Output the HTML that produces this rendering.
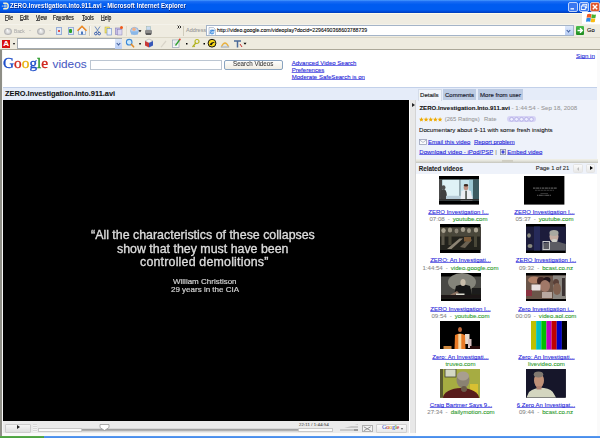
<!DOCTYPE html>
<html><head><meta charset="utf-8">
<style>
*{margin:0;padding:0;box-sizing:border-box}
html,body{width:600px;height:438px;overflow:hidden;background:#fff;font-family:"Liberation Sans",sans-serif;position:relative}
.a{position:absolute}
.t{position:absolute;white-space:nowrap;line-height:1;-webkit-text-stroke-width:0.08px}
#title{left:0;top:0;width:600px;height:12.5px;background:linear-gradient(#4a9cff 0,#1a6cf4 12%,#005cf0 35%,#005cf0 75%,#0048d4 90%,#003cb8 100%)}
#menu{left:0;top:12.5px;width:600px;height:11.5px;background:#efece1;border-top:1px solid #fffbe8}
#tb1{left:0;top:24px;width:600px;height:13px;background:#efece1;border-top:1px solid #f4f2ea}
#tb2{left:0;top:37px;width:600px;height:13px;background:#eeebdf;border-top:1px solid #dcd8c8}
.mi{font-size:6.9px;color:#000;top:15px;transform:scaleX(0.73);transform-origin:0 0;-webkit-text-stroke:0.15px #000}
.lnk{color:#2424d8;text-decoration:underline;text-decoration-color:rgba(50,50,220,0.7);text-decoration-skip-ink:none;text-underline-offset:0.2px}
.g{color:#2b9a2b}
.gr{color:#8a8a8a}
.vq{font-size:12.4px;color:#dcdcdc;-webkit-text-stroke:0.35px #dcdcdc;filter:blur(0.3px)}
.vs{font-size:8px;color:#d0d0d0;-webkit-text-stroke:0.2px #d0d0d0;filter:blur(0.25px)}
</style></head><body>
<!-- title bar -->
<div id="title" class="a"></div>
<div class="t" style="left:10px;top:2.2px;font-size:7.4px;letter-spacing:0.1px;font-weight:bold;color:#fff;text-shadow:0.5px 0.5px 0 #0a2a8a;transform:scaleX(0.81);transform-origin:0 0;-webkit-text-stroke-width:0">ZERO.Investigation.Into.911.avi - Microsoft Internet Explorer</div>
<svg class="a" style="left:1px;top:2px" width="8" height="8" viewBox="0 0 8 8"><path d="M2.2 1.2 H5 Q7.2 1.4 7.2 4 Q7.2 6.6 5 6.8 H2.2" fill="none" stroke="#f4f0c8" stroke-width="1.5"/><circle cx="4.2" cy="4" r="1.7" fill="#8ab8f0"/><circle cx="1.6" cy="4.2" r="0.9" fill="#7aa0d8"/></svg>
<svg class="a" style="left:567.5px;top:1.5px" width="32" height="10" viewBox="0 0 32 10">
<rect x="0.5" y="0.5" width="9" height="9" rx="1.5" fill="#3a78f0" stroke="#e8f0ff" stroke-width="0.8"/>
<rect x="2.5" y="6.2" width="3.5" height="1.3" fill="#fff"/>
<rect x="11.5" y="0.5" width="9" height="9" rx="1.5" fill="#3a78f0" stroke="#e8f0ff" stroke-width="0.8"/>
<rect x="14.8" y="2.3" width="4" height="3.5" fill="none" stroke="#fff" stroke-width="0.9"/>
<rect x="13.3" y="4" width="4" height="3.5" fill="#3a78f0" stroke="#fff" stroke-width="0.9"/>
<rect x="22.5" y="0.5" width="9" height="9" rx="1.5" fill="#e2562c" stroke="#f0e0d8" stroke-width="0.8"/>
<path d="M24.8 2.8 L29.2 7.2 M29.2 2.8 L24.8 7.2" stroke="#fff" stroke-width="1.4"/>
</svg>

<!-- menu -->
<div id="menu" class="a"></div>
<div class="t mi" style="left:5px">File</div>
<div class="t mi" style="left:19.5px">Edit</div>
<div class="t mi" style="left:36px">View</div>
<div class="t mi" style="left:53px">Favorites</div>
<div class="t mi" style="left:82px">Tools</div>
<div class="t mi" style="left:101px">Help</div>
<div class="a" style="left:582px;top:12px;width:18px;height:12px;background:#fff"></div>
<div class="a" style="left:5px;top:20.2px;width:3px;height:0.6px;background:#555"></div><div class="a" style="left:20px;top:20.2px;width:3px;height:0.6px;background:#555"></div><div class="a" style="left:36.3px;top:20.2px;width:3.5px;height:0.6px;background:#555"></div><div class="a" style="left:57.5px;top:20.2px;width:3px;height:0.6px;background:#555"></div><div class="a" style="left:82px;top:20.2px;width:3px;height:0.6px;background:#555"></div><div class="a" style="left:101.2px;top:20.2px;width:3.5px;height:0.6px;background:#555"></div>

<!-- toolbar 1 -->
<div id="tb1" class="a"></div>
<div class="a" style="left:206px;top:25px;width:368px;height:11px;background:#fff;border:1px solid #a4b4c8"></div>
<div class="t" style="left:217px;top:28px;font-size:5.2px;color:#000">http://video.google.com/videoplay?docid=2296490368603788739</div>
<div class="t" style="left:186px;top:28px;font-size:5.5px;color:#999">Address</div>

<!-- toolbar 2 -->
<div id="tb2" class="a"></div>
<div class="a" style="left:17px;top:38px;width:105px;height:11px;background:#fff;border:1px solid #a5acb2"></div>


<!-- toolbar1 icons -->
<div class="a" style="left:4px;top:27.5px;width:7.5px;height:7px;border-radius:50%;background:radial-gradient(#f4f4f4 0,#e0e0e0 30%,#b8b8b8 60%,#c8c8c8 100%)"></div>
<div class="t" style="left:13.5px;top:27.8px;font-size:6px;color:#aaa;transform:scaleX(0.8);transform-origin:0 0">Back</div>
<div class="a" style="left:6.3px;top:29.3px;width:0;height:0;border-right:2.5px solid #fff;border-top:1.8px solid transparent;border-bottom:1.8px solid transparent"></div><div class="a" style="left:28.5px;top:30.3px;width:0;height:0;border-top:1.8px solid #bbb;border-left:1.3px solid transparent;border-right:1.3px solid transparent"></div>
<div class="a" style="left:37px;top:27.5px;width:7.5px;height:7px;border-radius:50%;background:radial-gradient(#f4f4f4 0,#e0e0e0 30%,#b8b8b8 60%,#c8c8c8 100%)"></div>
<div class="a" style="left:40px;top:29.3px;width:0;height:0;border-left:2.5px solid #fff;border-top:1.8px solid transparent;border-bottom:1.8px solid transparent"></div><div class="a" style="left:49px;top:30.3px;width:0;height:0;border-top:1.8px solid #bbb;border-left:1.3px solid transparent;border-right:1.3px solid transparent"></div>
<div class="a" style="left:56px;top:27px;width:6px;height:7.5px;background:#dfe8f6;border:1px solid #9ab0d8"></div>
<div class="a" style="left:58px;top:29.8px;width:2px;height:2px;background:#e02010;border-radius:50%"></div>
<div class="a" style="left:67.5px;top:27px;width:6px;height:7.5px;background:#dfe8f6;border:1px solid #9ab0d8"></div>
<div class="a" style="left:69px;top:28.5px;width:3px;height:4.5px;background:#2aa02a;border-radius:1px"></div>
<svg class="a" style="left:76px;top:25px" width="80" height="11" viewBox="0 0 80 11">
<!-- home -->
<path d="M2.5 5.5 L6 2 L9.5 5.5 V9.5 H2.5Z" fill="#eef2f8" stroke="#7090c0" stroke-width="0.6"/>
<path d="M1.5 5.8 L6 1.3 L10.5 5.8" fill="none" stroke="#f08a20" stroke-width="1.6"/>
<rect x="5" y="6.5" width="2" height="3" fill="#4a78c0"/>
<!-- separator -->
<rect x="13" y="1" width="1" height="10" fill="#d0ccbc"/><rect x="14" y="1" width="0.6" height="10" fill="#fff"/>
<!-- cut -->
<path d="M19 1.5 L23 7.5 M24 1.5 L20 7.5" stroke="#6080b8" stroke-width="0.9"/>
<circle cx="19.8" cy="8.6" r="1.3" fill="none" stroke="#2850a8" stroke-width="0.9"/>
<circle cx="23.2" cy="8.6" r="1.3" fill="none" stroke="#2850a8" stroke-width="0.9"/>
<!-- copy -->
<rect x="29" y="2" width="4.5" height="6" fill="#f4e870" stroke="#c0a830" stroke-width="0.5"/>
<rect x="31" y="3.5" width="4.5" height="6.5" fill="#e8eefa" stroke="#6a8ac8" stroke-width="0.6"/>
<!-- paste -->
<rect x="39.5" y="3" width="5.5" height="6.5" fill="#c4bce6" stroke="#8880b8" stroke-width="0.6"/>
<rect x="41.5" y="4.5" width="4.5" height="5.5" fill="#dcd8f0" stroke="#8880b8" stroke-width="0.5"/>
<circle cx="45.5" cy="2.5" r="1.5" fill="#f05818"/>
<!-- separator -->
<rect x="50.5" y="1" width="1" height="10" fill="#d0ccbc"/><rect x="51.5" y="1" width="0.6" height="10" fill="#fff"/>
<!-- mail -->
<ellipse cx="58.5" cy="6" rx="4" ry="3.6" fill="#bcd4f0" stroke="#6a96d0" stroke-width="0.6"/>
<circle cx="58" cy="4.2" r="1.8" fill="#f0b088"/>
<rect x="55" y="6.3" width="7" height="3.2" fill="#8ab8e8"/>
<path d="M62.5 5.3 h3 l-1.5 2z" fill="#000"/>
<!-- print -->
<rect x="70.5" y="1.5" width="4" height="3.5" fill="#c8daf0" stroke="#8aa" stroke-width="0.4"/>
<rect x="69" y="5" width="7" height="4.5" rx="1" fill="#8c8c8c"/>
<rect x="70" y="8" width="5" height="2" fill="#5a5a5a"/>
</svg>
<svg class="a" style="left:176.5px;top:24.5px" width="5" height="4" viewBox="0 0 5 4"><path d="M0.6 0.6 L2 2 L0.6 3.4 M2.6 0.6 L4 2 L2.6 3.4" fill="none" stroke="#000" stroke-width="0.8"/></svg>
<div class="a" style="left:182.5px;top:26px;width:1px;height:10px;background:#d0ccbc"></div>
<svg class="a" style="left:207.5px;top:26.5px" width="8" height="9" viewBox="0 0 8 9"><path d="M1 0.5 H5.5 L7.5 2.5 V8.5 H1Z" fill="#f4f8fc" stroke="#98a8c0" stroke-width="0.6"/><circle cx="4" cy="5" r="2.4" fill="#5aa0e8"/><path d="M2.2 5 H5.8" stroke="#fff" stroke-width="0.8"/><path d="M1.5 6.5 Q4 2 7 3.2" fill="none" stroke="#2a70c8" stroke-width="0.6"/></svg>
<div class="a" style="left:565px;top:26px;width:8px;height:9px;background:linear-gradient(#dde8fa,#b8cdf4)"></div>
<div class="a" style="left:567.3px;top:29px;width:3px;height:3px;border-right:1px solid #3d5c9c;border-bottom:1px solid #3d5c9c;transform:rotate(45deg)"></div>
<div class="a" style="left:576px;top:26px;width:8px;height:9px;background:linear-gradient(#4cc04c,#1e8a1e);border-radius:1px"></div>
<svg class="a" style="left:576px;top:26px" width="8" height="9" viewBox="0 0 8 9"><path d="M1.5 4.5 H6 M4 2.2 L6.3 4.5 L4 6.8" stroke="#fff" stroke-width="1.4" fill="none"/></svg>
<div class="t" style="left:587px;top:28.3px;font-size:5.8px;color:#000">Go</div>
<!-- windows logo -->
<svg class="a" style="left:585px;top:12.5px" width="12" height="10" viewBox="0 0 12 10">
<path d="M2.2 1.2 Q4 0.4 6.6 1.2 L6 4.8 Q3.8 4.1 1.6 4.8Z" fill="#f45a20"/>
<path d="M6.9 1.3 Q9 2 11 1.4 L10.4 5.1 Q8.4 5.6 6.3 4.9Z" fill="#48b030"/>
<path d="M1.5 5.2 Q3.7 4.5 5.9 5.2 L5.3 8.8 Q3.2 8.1 1 8.8Z" fill="#2a88e8"/>
<path d="M6.2 5.3 Q8.3 6 10.3 5.4 L9.8 9 Q7.8 9.6 5.6 8.9Z" fill="#fbbc10"/>
</svg>

<!-- toolbar2 icons -->
<div class="a" style="left:2px;top:40px;width:8px;height:7.5px;background:#d81010"></div>
<div class="t" style="left:3.2px;top:40.3px;font-size:8px;color:#fff;font-weight:bold">A</div>
<div class="a" style="left:13px;top:43px;width:0;height:0;border-top:2px solid #000;border-left:1.5px solid transparent;border-right:1.5px solid transparent"></div>
<div class="a" style="left:115px;top:38.5px;width:7px;height:10px;background:linear-gradient(#dde8fa,#b8cdf4)"></div>
<div class="a" style="left:117px;top:41.5px;width:3px;height:3px;border-right:1px solid #3d5c9c;border-bottom:1px solid #3d5c9c;transform:rotate(45deg)"></div>
<svg class="a" style="left:124px;top:38px" width="125" height="11" viewBox="0 0 125 11">
<!-- magnifier -->
<circle cx="5.2" cy="4.2" r="2.8" fill="#c8e8fc" stroke="#3a88d8" stroke-width="1.1"/>
<path d="M7.3 6.3 L9.6 8.8" stroke="#e08a28" stroke-width="1.6" stroke-linecap="round"/>
<rect x="15.3" y="5" width="1.5" height="1.5" fill="#000"/>
<!-- cube -->
<path d="M25 1 L29 3 L25 5 L21 3Z" fill="#f0f0f0" stroke="#888" stroke-width="0.4"/>
<path d="M21 3 L25 5 L25 9.5 L21 7.5Z" fill="#c83838"/>
<path d="M29 3 L25 5 L25 9.5 L29 7.5Z" fill="#3858b8"/>
<!-- pen -->
<path d="M36.5 9 L41.5 2.5 L42.5 3.5 L37.5 9.5Z" fill="#d8d4c8"/>
<!-- notepad -->
<rect x="48.5" y="2" width="6.5" height="7.5" fill="#fafafa" stroke="#8898b0" stroke-width="0.6"/>
<path d="M49.5 4H53M49.5 5.5H53M49.5 7H52" stroke="#b0b8c8" stroke-width="0.5"/>
<path d="M51.5 7.5 L55.5 2" stroke="#30a030" stroke-width="1.3"/>
<circle cx="55.8" cy="1.6" r="1" fill="#e04030"/>
<rect x="62" y="5" width="1.5" height="1.5" fill="#000"/>
<!-- key -->
<circle cx="73" cy="3.5" r="2" fill="none" stroke="#b8b820" stroke-width="1.2"/>
<path d="M71.8 5 L68.5 9 M69.5 7.8 L70.8 8.8" stroke="#b0b020" stroke-width="1.2"/>
<rect x="79.5" y="5" width="1.5" height="1.5" fill="#000"/>
<!-- yellow circle -->
<circle cx="88" cy="5.2" r="3.9" fill="#f8d818" stroke="#111" stroke-width="1"/>
<path d="M85.5 6.5 Q87.5 3 91 4.2 Q88.5 4.5 87.5 7.2Z" fill="#111"/>
<!-- rainbow -->
<path d="M97.5 8.5 Q101 1.5 104.5 8.5" fill="none" stroke="#e8b040" stroke-width="1.3"/>
<path d="M96.8 9 H105.2" stroke="#8090a8" stroke-width="0.8"/>
<path d="M99 8.5 Q101 4.5 103 8.5" fill="none" stroke="#c8d8e8" stroke-width="0.8"/>
<!-- tools -->
<path d="M110 3 H117 M113.5 3 V9.5" stroke="#4a6a98" stroke-width="1.5"/>
<path d="M116 6 L118 9" stroke="#c83030" stroke-width="1"/>
<path d="M119.5 4.8 h3 l-1.5 2z" fill="#000"/>
</svg>

<!-- window frame -->
<div class="a" style="left:0;top:49px;width:600px;height:1px;background:#aca899"></div>
<div class="a" style="left:0;top:50px;width:1.5px;height:386px;background:#8e8e86"></div><div class="a" style="left:1.5px;top:50px;width:1.5px;height:386px;background:#f8f8f8"></div>
<div class="a" style="left:597px;top:50px;width:3px;height:386px;background:#fafafa"></div><div class="a" style="left:416px;top:99px;width:181px;height:1px;background:#c8d0e0"></div>

<!-- page header -->
<div class="t" style="left:3px;top:56px;font-family:'Liberation Serif',serif;font-size:14.2px;letter-spacing:0px;-webkit-text-stroke:0.35px;transform:scaleX(1.08);transform-origin:0 0"><span style="color:#1f4fc9">G</span><span style="color:#d0281f">o</span><span style="color:#e8b20c">o</span><span style="color:#1f4fc9">g</span><span style="color:#2b9a2b">l</span><span style="color:#d0281f">e</span></div>
<div class="t" style="left:52.5px;top:59px;font-size:11.8px;color:#4a5bc4">videos</div>
<div class="a" style="left:90px;top:60px;width:132px;height:10.3px;border:1px solid #bcc6d2;background:#fff"></div>
<div class="a" style="left:224px;top:59.6px;width:58.7px;height:10.3px;border:1px solid #8aa4c0;border-radius:2px;background:linear-gradient(#fefefc,#f0ede4)"></div>
<div class="t" style="left:233px;top:61px;font-size:6.7px;color:#3a3a3a;transform:scaleX(0.93);transform-origin:0 0">Search Videos</div>
<div class="t lnk" style="left:291.7px;top:59.5px;font-size:6.05px">Advanced Video Search</div>
<div class="t lnk" style="left:291.7px;top:67px;font-size:6.05px">Preferences</div>
<div class="t lnk" style="left:291.7px;top:74px;font-size:6.05px">Moderate SafeSearch is on</div>
<div class="t lnk" style="left:576px;top:52.6px;font-size:6.2px">Sign in</div>

<!-- title strip -->
<div class="a" style="left:3px;top:87px;width:594px;height:1px;background:#c3d1ea"></div>
<div class="a" style="left:3px;top:88px;width:594px;height:12px;background:#e5ecf9"></div>
<div class="t" style="left:5px;top:90px;font-size:7.4px;font-weight:bold;color:#111">ZERO.Investigation.Into.911.avi</div>

<!-- video -->
<div class="a" style="left:3px;top:100px;width:406px;height:321px;background:#000"></div>
<div class="a" style="left:3px;top:421px;width:406px;height:12px;background:#ebebeb"></div>

<!-- sidebar strip -->
<div class="a" style="left:409px;top:100px;width:7px;height:333.5px;background:linear-gradient(90deg,#fff 0,#fff 1px,#e8e8e8 1px,#e8e8e8 6px,#d4d4d4 6px)"></div>
<div class="a" style="left:3px;top:433px;width:413px;height:2.5px;background:#fafafa"></div>

<!-- sidebar -->
<div class="a" style="left:416px;top:100px;width:181px;height:59px;background:#eef2fa"></div>
<div class="a" style="left:416px;top:159px;width:181.5px;height:3.7px;background:linear-gradient(#f2f2ea,#e2e2da 50%,#c4c4bc)"></div>
<div class="a" style="left:416px;top:162.5px;width:181px;height:11.5px;background:#eef2fa"></div>
<div class="a" style="left:416px;top:174px;width:181px;height:259px;background:#fff"></div>


<!-- video text -->
<div class="t vq" style="left:91px;top:228.5px">&#8220;All the characteristics of these collapses</div>
<div class="t vq" style="left:117px;top:242.5px">show that they must have been</div>
<div class="t vq" style="left:140px;top:256px;letter-spacing:0.2px">controlled demolitions&#8221;</div>
<div class="t vs" style="left:173px;top:277.5px">William Christison</div>
<div class="t vs" style="left:171px;top:286px">29 years in the CIA</div>

<!-- control bar -->
<div class="a" style="left:4.5px;top:423.5px;width:26.5px;height:9px;border:1px solid #cdcdcd;background:linear-gradient(#f6f6f6,#e0e0e0);border-radius:1px"></div>
<div class="a" style="left:17px;top:425.3px;width:0;height:0;border-left:3.5px solid #222;border-top:2.6px solid transparent;border-bottom:2.6px solid transparent"></div>
<div class="a" style="left:33px;top:424px;width:4px;height:8px;background:repeating-linear-gradient(#d8d8d8 0,#d8d8d8 1px,#f4f4f4 1px,#f4f4f4 2px)"></div>
<div class="a" style="left:38px;top:427.8px;width:295px;height:4px;background:linear-gradient(#9a9a9a,#b8b8b8);border:1px solid #d8d8d8"></div>
<div class="a" style="left:38px;top:427.8px;width:44px;height:4px;background:#fbfbfb;border:1px solid #c8c8c8"></div>
<div class="a" style="left:298px;top:427.8px;width:35px;height:4px;background:#fbfbfb;border:1px solid #c8c8c8"></div>
<svg class="a" style="left:99px;top:423.5px" width="11" height="7" viewBox="0 0 11 7"><path d="M1 0.5H10V3.5L5.5 6.5L1 3.5Z" fill="#fff" stroke="#999" stroke-width="0.8"/></svg>
<div class="t" style="left:299px;top:422.6px;font-size:4.2px;color:#555;letter-spacing:0.15px">22:11 / 1:44:54</div>
<div class="a" style="left:340px;top:424px;width:18px;height:7px;background:repeating-linear-gradient(#c8c8c8 0,#c8c8c8 1px,#ececec 1px,#ececec 1.6px);clip-path:polygon(0 75%,100% 0,100% 100%,0 100%)"></div>
<div class="a" style="left:354px;top:428.5px;width:4px;height:2.5px;background:#999"></div>
<div class="a" style="left:362.3px;top:424.5px;width:10.5px;height:7.5px;border:1px solid #b0b0b0;background:#f4f4f4"></div>
<svg class="a" style="left:363.3px;top:425.5px" width="8.5" height="5.5" viewBox="0 0 8.5 5.5"><path d="M0.8 0.8L7.7 4.7M7.7 0.8L0.8 4.7" stroke="#888" stroke-width="0.9"/></svg>
<div class="a" style="left:376px;top:423.6px;width:31px;height:9.4px;border:1px solid #d0d0d0;background:linear-gradient(#fafafa,#e8e8e8);border-radius:1px"></div>
<div class="t" style="left:382px;top:424.3px;font-size:6.2px;font-family:'Liberation Serif',serif;letter-spacing:-0.2px"><span style="color:#4060d0">G</span><span style="color:#d04040">o</span><span style="color:#e0b020">o</span><span style="color:#4060d0">g</span><span style="color:#40a040">l</span><span style="color:#d04040">e</span></div>
<div class="a" style="left:400.5px;top:427.5px;width:0;height:0;border-top:2px solid #555;border-left:1.5px solid transparent;border-right:1.5px solid transparent"></div>

<!-- sidebar tabs -->
<div class="a" style="left:418px;top:88.5px;width:24px;height:12px;background:#f2f5fb;border:1px solid #d4dcea;border-bottom:none"></div>
<div class="t" style="left:420px;top:91.5px;font-size:6.09px;color:#222;-webkit-text-stroke:0.15px #222">Details</div>
<div class="a" style="left:443px;top:89px;width:33px;height:11px;background:#bccbe3"></div>
<div class="t" style="left:445px;top:91.5px;font-size:6px;color:#1a2030;-webkit-text-stroke:0.15px #1a2030">Comments</div>
<div class="a" style="left:478px;top:89px;width:45px;height:11px;background:#bccbe3"></div>
<div class="t" style="left:480px;top:91.5px;font-size:6.05px;color:#1a2030;-webkit-text-stroke:0.15px #1a2030">More from user</div>
<div class="a" style="left:412px;top:103px;width:0;height:0;border-left:3px solid #222;border-top:2.5px solid transparent;border-bottom:2.5px solid transparent"></div>

<!-- details -->
<div class="t" style="left:419.4px;top:104.5px;font-size:6.08px;font-weight:bold;color:#111">ZERO.Investigation.Into.911.avi<span style="font-weight:normal;color:#999"> - 1:44:54 - Sep 18, 2008</span></div>
<svg class="a" style="left:419px;top:117px" width="25" height="6" viewBox="0 0 25 6" fill="#eeaa00"><polygon points="2.40,0.10 3.05,1.71 4.78,1.83 3.45,2.94 3.87,4.62 2.40,3.70 0.93,4.62 1.35,2.94 0.02,1.83 1.75,1.71"/><polygon points="7.06,0.10 7.71,1.71 9.44,1.83 8.11,2.94 8.53,4.62 7.06,3.70 5.59,4.62 6.01,2.94 4.68,1.83 6.41,1.71"/><polygon points="11.72,0.10 12.37,1.71 14.10,1.83 12.77,2.94 13.19,4.62 11.72,3.70 10.25,4.62 10.67,2.94 9.34,1.83 11.07,1.71"/><polygon points="16.38,0.10 17.03,1.71 18.76,1.83 17.43,2.94 17.85,4.62 16.38,3.70 14.91,4.62 15.33,2.94 14.00,1.83 15.73,1.71"/><polygon points="21.04,0.10 21.69,1.71 23.42,1.83 22.09,2.94 22.51,4.62 21.04,3.70 19.57,4.62 19.99,2.94 18.66,1.83 20.39,1.71"/></svg>
<div class="t" style="left:444.7px;top:117px;font-size:5.83px;color:#999">(265 Ratings)</div>
<div class="t" style="left:484px;top:117px;font-size:5.9px;color:#999">Rate</div>
<div class="a" style="left:506.7px;top:115.7px;width:29px;height:6.6px;background:#d6d3f5;border-radius:3.3px"></div>
<svg class="a" style="left:506.7px;top:115.7px" width="29" height="7" viewBox="0 0 29 7"><circle cx="4.60" cy="3.3" r="1.9" fill="#eeeeff" stroke="#a8a4e0" stroke-width="0.7"/><circle cx="9.55" cy="3.3" r="1.9" fill="#eeeeff" stroke="#a8a4e0" stroke-width="0.7"/><circle cx="14.50" cy="3.3" r="1.9" fill="#eeeeff" stroke="#a8a4e0" stroke-width="0.7"/><circle cx="19.45" cy="3.3" r="1.9" fill="#eeeeff" stroke="#a8a4e0" stroke-width="0.7"/><circle cx="24.40" cy="3.3" r="1.9" fill="#eeeeff" stroke="#a8a4e0" stroke-width="0.7"/></svg>
<div class="t" style="left:419px;top:127.3px;font-size:6.11px;color:#111">Documentary about 9-11 with some fresh insights</div>
<svg class="a" style="left:419px;top:138.5px" width="8" height="6" viewBox="0 0 8 6"><rect x="0.5" y="0.5" width="7" height="5" fill="#fafafa" stroke="#9aa0b8" stroke-width="0.8"/><path d="M0.5 0.8L4 3.5L7.5 0.8" stroke="#9aa0b8" stroke-width="0.7" fill="none"/></svg>
<div class="t lnk" style="left:428px;top:138.5px;font-size:6.07px">Email this video</div>
<div class="t lnk" style="left:474px;top:138.6px;font-size:6.02px;letter-spacing:-0.05px">Report problem</div>
<div class="t lnk" style="left:419.3px;top:149.2px;font-size:6.02px">Download video - iPod/PSP</div>
<div class="t" style="left:495.2px;top:149.2px;font-size:6px;color:#777">|</div>
<svg class="a" style="left:500px;top:148.8px" width="6" height="6" viewBox="0 0 6 6"><rect x="0.4" y="0.4" width="5.2" height="5.2" fill="#e4e8f0" stroke="#8890a8" stroke-width="0.8"/><path d="M3 1.3V4.7M1.3 3H4.7" stroke="#1a1ad0" stroke-width="1.1"/></svg>
<div class="t lnk" style="left:507.3px;top:149.2px;font-size:6.02px">Embed video</div>
<div class="a" style="left:502px;top:160px;width:11px;height:1.5px;background:#cfcdc2"></div>

<!-- related header -->
<div class="t" style="left:418.7px;top:165.7px;font-size:6.28px;font-weight:bold;color:#222">Related videos</div>
<div class="t" style="left:535.8px;top:165.8px;font-size:5.9px;color:#222">Page 1 of 21</div>
<div class="a" style="left:573.3px;top:164px;width:10px;height:8.5px;border:1px solid #e4e4e4;background:linear-gradient(#fafafa,#e8e8e8);border-radius:1.5px"></div>
<div class="a" style="left:577px;top:166.5px;width:0;height:0;border-right:2.5px solid #bbb;border-top:2px solid transparent;border-bottom:2px solid transparent"></div>
<div class="a" style="left:585.8px;top:164px;width:9.5px;height:8.5px;border:1px solid #e4e4e4;background:linear-gradient(#fafafa,#e8e8e8);border-radius:1.5px"></div>
<div class="a" style="left:589.5px;top:166.3px;width:0;height:0;border-left:3px solid #000;border-top:2.2px solid transparent;border-bottom:2.2px solid transparent"></div>

<!-- related list -->
<!-- thumbs -->
<svg class="a" style="left:438.7px;top:176.2px" width="40.2" height="28.6" viewBox="0 0 40.2 28.6"><defs><filter id="b438176" x="-10%" y="-10%" width="120%" height="120%"><feGaussianBlur stdDeviation="0.5"/></filter></defs><rect width="40.2" height="28.6" fill="#000"/><g filter="url(#b438176)">
<rect x="0" y="3.6" width="40.2" height="20.8" fill="#9cbcc4"/>
<rect x="3.5" y="3.8" width="17" height="16.5" fill="#dff2f6"/>
<rect x="20.5" y="3.8" width="1.1" height="17" fill="#6a7a80"/>
<rect x="21.6" y="3.8" width="12.6" height="16.5" fill="#c6e4ec"/>
<rect x="30" y="3.8" width="4.2" height="16.5" fill="#9cc8d4"/>
<rect x="34" y="3.6" width="6.2" height="20.8" fill="#3a5a60"/>
<rect x="0" y="3.6" width="3" height="20.8" fill="#484848"/>
<ellipse cx="4.5" cy="19" rx="3.3" ry="6" fill="#404040"/>
<ellipse cx="4.5" cy="11.5" rx="2" ry="2.3" fill="#505050"/>
<rect x="7" y="19.8" width="27" height="3.2" fill="#b8ccd8"/>
<path d="M21.5 24.4 L22.5 15 Q27 13.2 32 15 L33.5 24.4Z" fill="#eceef2"/>
<rect x="26.4" y="14.8" width="1.3" height="8.5" fill="#283028"/>
<ellipse cx="27" cy="11.5" rx="2.3" ry="2.8" fill="#c09080"/>
<ellipse cx="27" cy="9.3" rx="2.3" ry="1.2" fill="#3a2a22"/>
<rect x="0" y="23" width="40.2" height="1.5" fill="#303030"/>
</g></svg>
<svg class="a" style="left:524.3px;top:176.2px" width="40.4" height="28.6" viewBox="0 0 40.4 28.6"><defs><filter id="b524176" x="-10%" y="-10%" width="120%" height="120%"><feGaussianBlur stdDeviation="0.2"/></filter></defs><rect width="40.4" height="28.6" fill="#000"/><g filter="url(#b524176)">
<path d="M9 12.1 H33" stroke="#a0a0a0" stroke-width="0.7" stroke-dasharray="2.5 0.6 3 0.6 1.5 0.6"/>
<path d="M11 14.3 H30" stroke="#6a6a6a" stroke-width="0.55" stroke-dasharray="2 0.5 3 0.5"/>
<path d="M16.5 17.5 H24" stroke="#6a6a6a" stroke-width="0.5"/>
<path d="M13 19.3 H27" stroke="#909090" stroke-width="0.65" stroke-dasharray="1.2 0.6 4 0.6"/>
</g></svg>
<svg class="a" style="left:440.2px;top:224.2px" width="40.6" height="29" viewBox="0 0 40.6 29"><defs><filter id="b440224" x="-10%" y="-10%" width="120%" height="120%"><feGaussianBlur stdDeviation="0.55"/></filter></defs><rect width="40.6" height="29" fill="#000"/><g filter="url(#b440224)">
<rect x="0" y="3" width="40.6" height="23" fill="#24221c"/>
<rect x="0" y="3.5" width="40.6" height="9" fill="#4a463a"/>
<ellipse cx="3.5" cy="6.5" rx="2.2" ry="2.6" fill="#a8a290"/>
<ellipse cx="10" cy="6" rx="2.2" ry="2.6" fill="#9a9482"/>
<ellipse cx="16.5" cy="7" rx="2" ry="2.4" fill="#8a8474"/>
<ellipse cx="23" cy="5.5" rx="2.2" ry="2.6" fill="#a49e8c"/>
<ellipse cx="29" cy="6.5" rx="2" ry="2.6" fill="#9a9482"/>
<ellipse cx="36" cy="6" rx="2.2" ry="2.6" fill="#aaa492"/>
<rect x="1.5" y="9" width="3" height="12" fill="#5a5648"/>
<rect x="8.5" y="9" width="3" height="12" fill="#4a4638"/>
<rect x="34" y="9" width="3" height="14" fill="#4a4638"/>
<path d="M7 25 L19.5 14.5 L23 14.5 L11.5 25Z" fill="#8c8474"/>
<path d="M20 23 L29.5 14 L32 16 L25 24Z" fill="#6a6252"/>
<rect x="24" y="13" width="7" height="4.5" fill="#7a5a38"/>
</g></svg>
<svg class="a" style="left:526.2px;top:224.2px" width="39.8" height="29" viewBox="0 0 39.8 29"><defs><filter id="b526224" x="-10%" y="-10%" width="120%" height="120%"><feGaussianBlur stdDeviation="0.6"/></filter></defs><rect width="39.8" height="29" fill="#000"/><g filter="url(#b526224)">
<rect x="0" y="2.5" width="39.8" height="24" fill="#1a1c3a"/>
<rect x="8" y="2.5" width="6" height="24" fill="#262c5a"/>
<ellipse cx="3" cy="11.5" rx="1.8" ry="2.2" fill="#8a8a80"/>
<ellipse cx="4" cy="22" rx="2.5" ry="2" fill="#8a8a80"/>
<path d="M16 26.5 L18 19 L30 17 L39.8 20 L39.8 26.5Z" fill="#5c5c64"/>
<rect x="17" y="17.5" width="6.5" height="8" fill="none" stroke="#d8d8d8" stroke-width="0.9"/>
<ellipse cx="28" cy="12.5" rx="4.5" ry="5.5" fill="#c4aca0"/>
<ellipse cx="28" cy="9" rx="4.6" ry="3" fill="#a8a8a0"/>
<ellipse cx="28.5" cy="16.5" rx="3" ry="1.5" fill="#d0d0c8"/>
</g></svg>
<svg class="a" style="left:440.5px;top:272.9px" width="40.3" height="28.6" viewBox="0 0 40.3 28.6"><defs><filter id="b440272" x="-10%" y="-10%" width="120%" height="120%"><feGaussianBlur stdDeviation="0.6"/></filter></defs><rect width="40.3" height="28.6" fill="#000"/><g filter="url(#b440272)">
<rect x="0" y="3.5" width="40.3" height="22" fill="#4a4a44"/>
<ellipse cx="21" cy="9" rx="14" ry="9" fill="#84847a"/>
<path d="M13 22 L15 13 Q22 10 29 13 L31 22Z" fill="#161616"/>
<path d="M9 22 L16 18 L18 20 L12 23Z" fill="#8a7060"/>
<ellipse cx="22" cy="9.5" rx="2.6" ry="3.6" fill="#c8bcaa"/>
<rect x="15" y="20.5" width="8.5" height="3" fill="#dcdcd0"/>
<rect x="31" y="15" width="9.3" height="10.5" fill="#1c1c1a"/>
<rect x="0" y="22" width="40.3" height="3.5" fill="#1a1812"/>
</g></svg>
<svg class="a" style="left:526.2px;top:272.9px" width="40.3" height="28.6" viewBox="0 0 40.3 28.6"><defs><filter id="b526272" x="-10%" y="-10%" width="120%" height="120%"><feGaussianBlur stdDeviation="0.6"/></filter></defs><rect width="40.3" height="28.6" fill="#000"/><g filter="url(#b526272)">
<rect x="0" y="2.5" width="40.3" height="23.5" fill="#6a5448"/>
<rect x="27" y="2.5" width="13.3" height="23.5" fill="#8a8680"/>
<ellipse cx="8" cy="7" rx="6" ry="3.5" fill="#b08068"/>
<ellipse cx="15" cy="8" rx="4" ry="4" fill="#3a2420"/>
<ellipse cx="21" cy="7" rx="3.5" ry="3" fill="#20181a"/>
<ellipse cx="19" cy="13" rx="5" ry="6" fill="#a07868"/>
<ellipse cx="30" cy="9.5" rx="3" ry="3.5" fill="#5a4038"/>
<ellipse cx="31" cy="16" rx="4" ry="6" fill="#806050"/>
<rect x="5.5" y="11.5" width="9" height="6" fill="#e8e0e0"/>
<rect x="0" y="17" width="6" height="6" fill="#8a3040"/>
<rect x="16" y="19" width="10" height="6" fill="#b8a8a0"/>
<rect x="36" y="5" width="3" height="18" fill="#3a3030"/>
</g></svg>
<svg class="a" style="left:440.3px;top:321.1px" width="40" height="28.3" viewBox="0 0 40 28.3"><defs><filter id="b440321" x="-10%" y="-10%" width="120%" height="120%"><feGaussianBlur stdDeviation="0.65"/></filter></defs><rect width="40" height="28.3" fill="#000"/><g filter="url(#b440321)">
<rect x="3.5" y="25" width="8" height="3" fill="#d08a40"/>
<rect x="25" y="13" width="4.5" height="10" fill="#e8dcd0"/>
<rect x="28" y="18" width="3.5" height="9" fill="#d8c0c0"/>
<path d="M14.5 28.3 L15 14 Q20 11 25 14 L25.5 28.3Z" fill="#e87a28"/>
<rect x="18.3" y="13" width="3" height="15.3" fill="#f4d8a4"/>
<ellipse cx="20" cy="8.5" rx="2" ry="2.6" fill="#c06838"/>
<rect x="30" y="25" width="10" height="3.3" fill="#2a0a08"/>
</g></svg>
<svg class="a" style="left:530.6px;top:321.1px" width="36" height="28.6" viewBox="0 0 36 28.6"><rect x="0.00" y="0" width="5.19" height="28.6" fill="#c0c000"/><rect x="5.14" y="0" width="5.19" height="28.6" fill="#00c0c0"/><rect x="10.29" y="0" width="5.19" height="28.6" fill="#00c000"/><rect x="15.43" y="0" width="5.19" height="28.6" fill="#c000c0"/><rect x="20.57" y="0" width="5.19" height="28.6" fill="#c00000"/><rect x="25.71" y="0" width="5.19" height="28.6" fill="#0000c0"/><rect x="30.86" y="0" width="5.19" height="28.6" fill="#000000"/></svg>
<svg class="a" style="left:440.3px;top:369px" width="40" height="28.6" viewBox="0 0 40 28.6"><defs><filter id="b440369" x="-10%" y="-10%" width="120%" height="120%"><feGaussianBlur stdDeviation="0.6"/></filter></defs><rect width="40" height="28.6" fill="#000"/><g filter="url(#b440369)">
<rect x="0" y="0" width="40" height="28.6" fill="#a6ac42"/>
<rect x="0" y="0" width="3" height="28.6" fill="#5a5a30"/>
<rect x="5" y="0" width="11" height="8" fill="#d4d8c4"/>
<rect x="5" y="0" width="11" height="8" fill="none" stroke="#404030" stroke-width="0.8"/>
<rect x="30" y="15" width="8" height="13.6" fill="#d8c030"/>
<ellipse cx="21" cy="29" rx="18" ry="10" fill="#581a1a"/>
<ellipse cx="23" cy="11" rx="6.5" ry="8" fill="#8a8272"/>
<ellipse cx="23" cy="7" rx="6" ry="4.5" fill="#a89e90"/>
<ellipse cx="24" cy="20" rx="3" ry="3" fill="#6a5a4a"/>
</g></svg>
<svg class="a" style="left:526.3px;top:369px" width="39.7" height="28.6" viewBox="0 0 39.7 28.6"><defs><filter id="b526369" x="-10%" y="-10%" width="120%" height="120%"><feGaussianBlur stdDeviation="0.6"/></filter></defs><rect width="39.7" height="28.6" fill="#000"/><g filter="url(#b526369)">
<rect x="0" y="0" width="39.7" height="28.6" fill="#12142a"/>
<path d="M0.5 28.6 L3 23 Q10 18 18 19 Q26 20 28 25 L30 28.6Z" fill="#d4d6c0"/>
<ellipse cx="13" cy="11.5" rx="5" ry="7.5" fill="#c09078"/>
<ellipse cx="12.5" cy="5.5" rx="4.8" ry="3" fill="#807870"/>
<rect x="10.5" y="17" width="5" height="3.5" fill="#b08070"/>
</g></svg>
<!-- /thumbs -->
<div class="t lnk rt" style="left:418.5px;top:208.8px;width:80px;text-align:center;font-size:6px">ZERO Investigation I...</div>
<div class="t rm" style="left:413.5px;top:216.3px;width:90px;text-align:center;font-size:6.1px"><span class="gr">07:08</span><span class="gr" style="margin:0 3px">-</span><span class="g">youtube.com</span></div>
<div class="t lnk rt" style="left:504.5px;top:208.8px;width:80px;text-align:center;font-size:6px">ZERO Investigation I...</div>
<div class="t rm" style="left:499.5px;top:216.3px;width:90px;text-align:center;font-size:6.1px"><span class="gr">05:37</span><span class="gr" style="margin:0 3px">-</span><span class="g">youtube.com</span></div>
<div class="t lnk rt" style="left:420.5px;top:257.1px;width:80px;text-align:center;font-size:6px">ZERO: An Investigati...</div>
<div class="t rm" style="left:415.5px;top:264.6px;width:90px;text-align:center;font-size:6.1px"><span class="gr">1:44:54</span><span class="gr" style="margin:0 3px">-</span><span class="g">video.google.com</span></div>
<div class="t lnk rt" style="left:506px;top:257.1px;width:80px;text-align:center;font-size:6px">ZERO Investigation I...</div>
<div class="t rm" style="left:501px;top:264.6px;width:90px;text-align:center;font-size:6.1px"><span class="gr">09:32</span><span class="gr" style="margin:0 3px">-</span><span class="g">bcast.co.nz</span></div>
<div class="t lnk rt" style="left:420.5px;top:305.5px;width:80px;text-align:center;font-size:6px">ZERO Investigation I...</div>
<div class="t rm" style="left:415.5px;top:313.0px;width:90px;text-align:center;font-size:6.1px"><span class="gr">09:54</span><span class="gr" style="margin:0 3px">-</span><span class="g">youtube.com</span></div>
<div class="t lnk rt" style="left:506px;top:305.5px;width:80px;text-align:center;font-size:6px">Zero Investigation i...</div>
<div class="t rm" style="left:501px;top:313.0px;width:90px;text-align:center;font-size:6.1px"><span class="gr">00:09</span><span class="gr" style="margin:0 3px">-</span><span class="g">video.aol.com</span></div>
<div class="t lnk rt" style="left:420.5px;top:353.8px;width:80px;text-align:center;font-size:6px">Zero: An Investigati...</div>
<div class="t rm" style="left:415.5px;top:361.3px;width:90px;text-align:center;font-size:6.1px"><span class="g">truveo.com</span></div>
<div class="t lnk rt" style="left:506.5px;top:353.8px;width:80px;text-align:center;font-size:6px">Zero: An Investigati...</div>
<div class="t rm" style="left:501.5px;top:361.3px;width:90px;text-align:center;font-size:6.1px"><span class="g">livevideo.com</span></div>
<div class="t lnk rt" style="left:421px;top:401.8px;width:80px;text-align:center;font-size:6px">Craig Bartmer Says 9...</div>
<div class="t rm" style="left:416px;top:409.3px;width:90px;text-align:center;font-size:6.1px"><span class="gr">27:34</span><span class="gr" style="margin:0 3px">-</span><span class="g">dailymotion.com</span></div>
<div class="t lnk rt" style="left:506px;top:401.8px;width:80px;text-align:center;font-size:6px">6 Zero An Investigat...</div>
<div class="t rm" style="left:501px;top:409.3px;width:90px;text-align:center;font-size:6.1px"><span class="gr">09:44</span><span class="gr" style="margin:0 3px">-</span><span class="g">bcast.co.nz</span></div>
<!-- taskbar -->
<div class="a" style="left:0;top:435.5px;width:600px;height:3px;background:linear-gradient(#5a9cf0,#3a7ee6)"></div>
<div class="a" style="left:0;top:435.5px;width:44px;height:3px;background:linear-gradient(#5aae4a,#3e963a)"></div>
</body></html>
